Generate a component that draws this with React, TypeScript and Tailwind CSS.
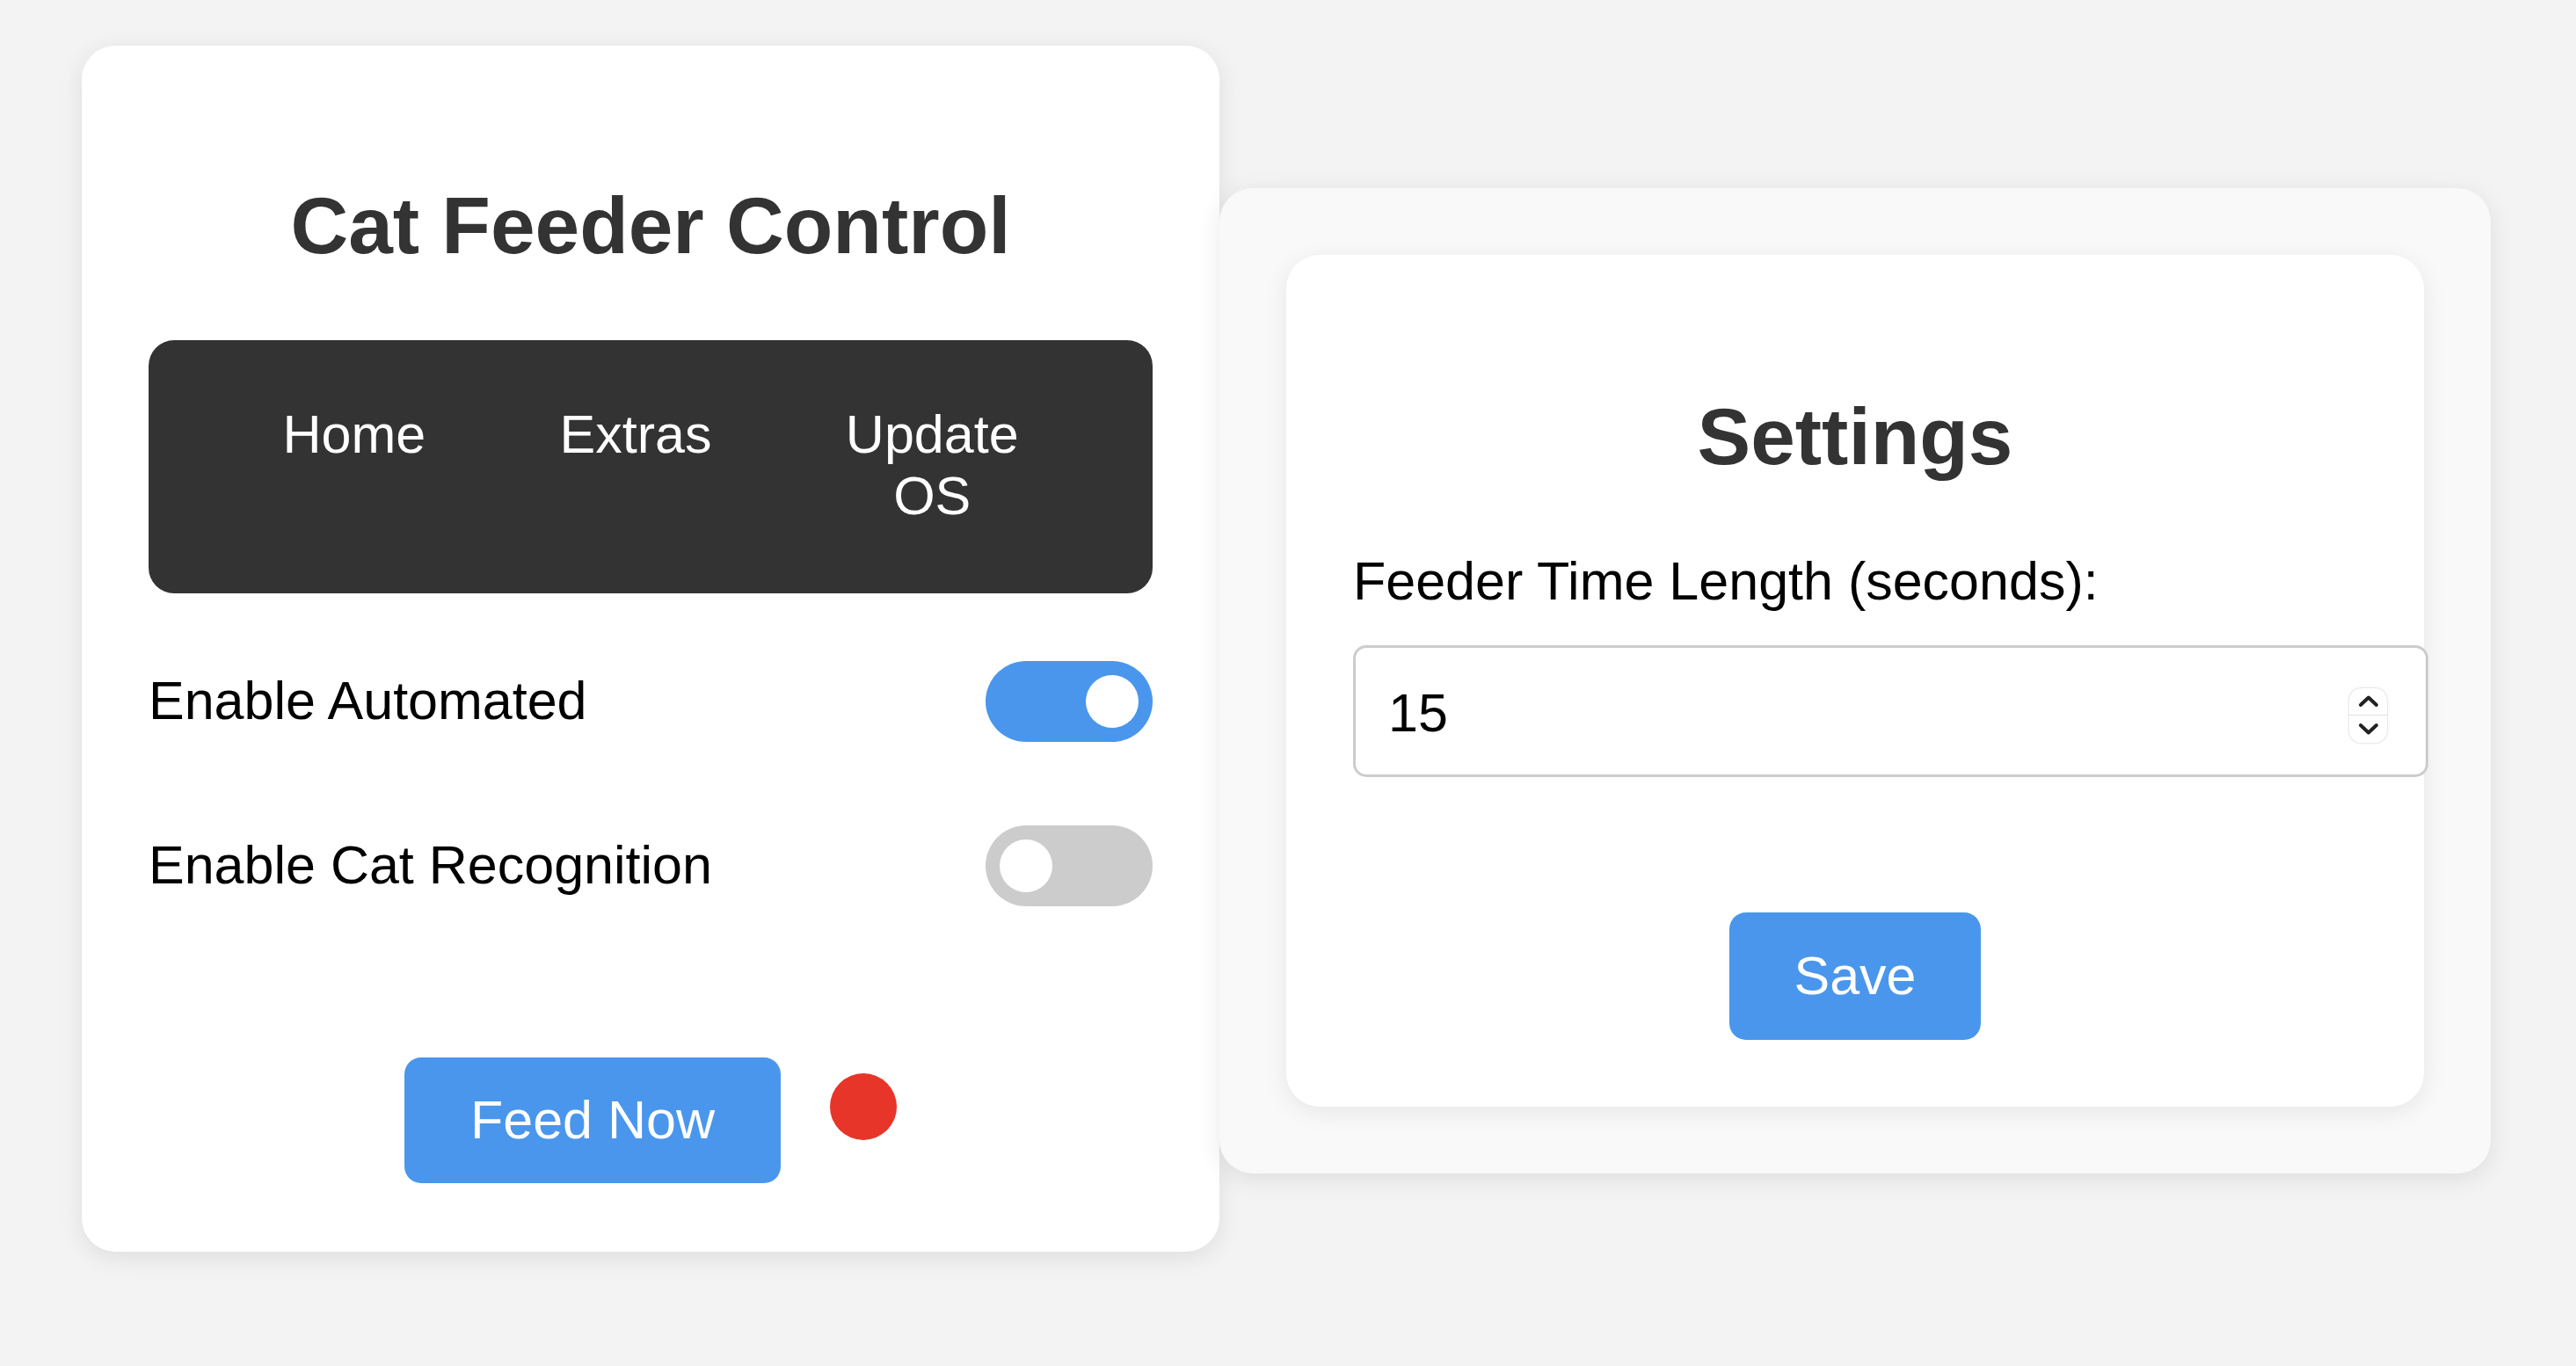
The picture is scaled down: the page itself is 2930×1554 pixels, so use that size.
import { useState } from "react"

const font = { fontFamily: '"Liberation Sans", Arial, Helvetica, sans-serif' }

function Toggle({ on, onChange }: { on: boolean; onChange: () => void }) {
    return (
        <button
            onClick={onChange}
            className={`relative h-[92px] w-[190px] shrink-0 rounded-full transition-colors ${on ? "bg-[#4a96ec]" : "bg-[#cccccc]"}`}
        >
            <span
                className={`absolute top-[16px] h-[60px] w-[60px] rounded-full bg-white transition-all ${on ? "left-[114px]" : "left-[16px]"}`}
            />
        </button>
    )
}

function Spinner() {
    return (
        <div className="mt-[9px] flex h-[62px] w-[43px] shrink-0 flex-col overflow-hidden rounded-[14px] bg-white shadow-[0_0_3px_rgba(0,0,0,0.22)]">
            <div className="flex flex-1 items-center justify-center border-b border-[#e2e2e2]">
                <svg width="24" height="15" viewBox="0 0 24 15" fill="none">
                    <path d="M3 12 L12 3.5 L21 12" stroke="#222" strokeWidth="4" strokeLinecap="round" strokeLinejoin="round" />
                </svg>
            </div>
            <div className="flex flex-1 items-center justify-center">
                <svg width="24" height="15" viewBox="0 0 24 15" fill="none">
                    <path d="M3 3 L12 11.5 L21 3" stroke="#222" strokeWidth="4" strokeLinecap="round" strokeLinejoin="round" />
                </svg>
            </div>
        </div>
    )
}

export default function App() {
    const [automated, setAutomated] = useState(true)
    const [recognition, setRecognition] = useState(false)
    const [seconds, setSeconds] = useState("15")

    return (
        <div className="flex min-h-screen items-start bg-[#f3f3f3] pl-[93px] pt-[52px]" style={font}>
            {/* main control card */}
            <div className="w-[1294px] shrink-0 rounded-[38px] bg-white px-[76px] pt-[76px] pb-[78px] shadow-[0_6px_28px_rgba(0,0,0,0.09)]">
                <h2 className="mt-[76px] mb-[77px] text-center text-[91px] font-bold leading-[106px] text-[#333]">Cat Feeder Control</h2>

                <nav className="flex justify-evenly rounded-[29px] bg-[#333] pt-[72px] pb-[76px] text-center text-[61px] leading-[70px] text-white">
                    <a className="cursor-pointer">Home</a>
                    <a className="cursor-pointer">Extras</a>
                    <a className="cursor-pointer">Update<br />OS</a>
                </nav>

                <div className="mt-[77px] flex h-[92px] items-center justify-between text-[61px] text-black">
                    <span>Enable Automated</span>
                    <Toggle on={automated} onChange={() => setAutomated(!automated)} />
                </div>
                <div className="mt-[95px] flex h-[92px] items-center justify-between text-[61px] text-black">
                    <span>Enable Cat Recognition</span>
                    <Toggle on={recognition} onChange={() => setRecognition(!recognition)} />
                </div>

                <div className="mt-[172px] flex items-start justify-center gap-[56px]">
                    <button className="h-[143px] rounded-[19px] bg-[#4a96ec] px-[75px] text-[61px] text-white">Feed Now</button>
                    <span className="mt-[18px] h-[76px] w-[76px] rounded-full bg-[#e8352a]" />
                </div>
            </div>

            {/* settings panel */}
            <div className="mt-[162px] shrink-0 rounded-[38px] bg-[#f9f9f9] p-[76px] shadow-[0_6px_28px_rgba(0,0,0,0.09)]">
                <div className="w-[1294px] rounded-[38px] bg-white p-[76px] shadow-[0_6px_28px_rgba(0,0,0,0.08)]">
                    <h2 className="mt-[78px] mb-[76px] text-center text-[91px] font-bold leading-[106px] text-[#333]">Settings</h2>
                    <label className="mb-[38px] block text-[61px] leading-[70px] text-black">Feeder Time Length (seconds):</label>
                    <div className="flex h-[150px] w-[calc(100%+81px)] items-center rounded-[15px] border-[3px] border-[#cccccc] bg-white pl-[37px] pr-[44px]">
                        <input
                            type="text"
                            value={seconds}
                            onChange={e => setSeconds(e.target.value)}
                            className="mt-[4px] min-w-0 flex-1 bg-transparent text-[61px] leading-[70px] text-black outline-none"
                        />
                        <Spinner />
                    </div>
                    <div className="mt-[154px] flex justify-center">
                        <button className="h-[145px] rounded-[19px] bg-[#4a96ec] px-[73px] text-[61px] text-white">Save</button>
                    </div>
                </div>
            </div>
        </div>
    )
}
